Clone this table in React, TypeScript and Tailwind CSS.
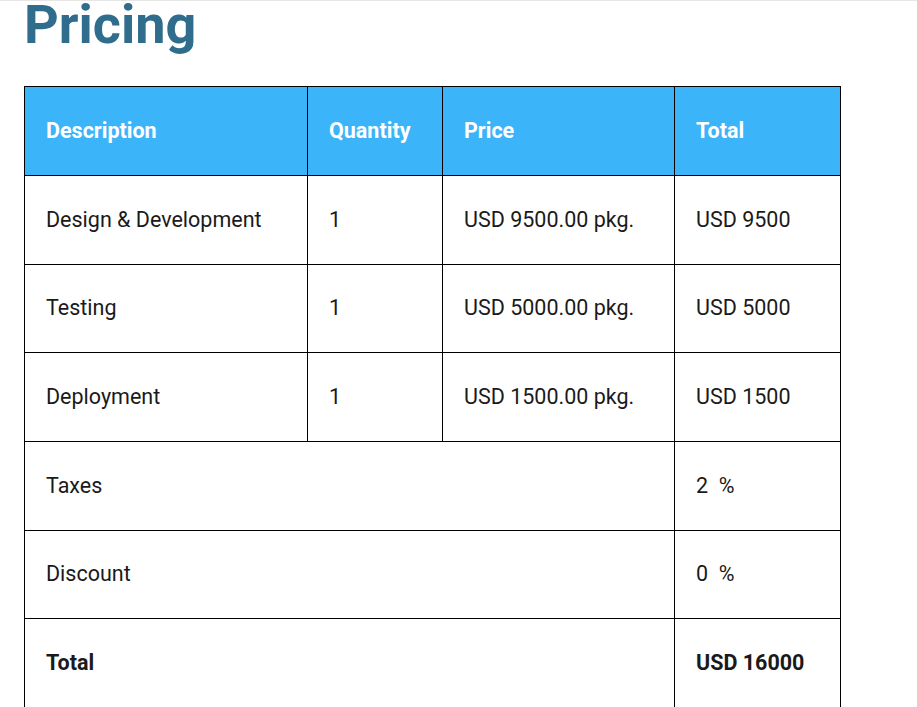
import React from "react";

const rows = [
  ["Design & Development", "1", "USD 9500.00 pkg.", "USD 9500"],
  ["Testing", "1", "USD 5000.00 pkg.", "USD 5000"],
  ["Deployment", "1", "USD 1500.00 pkg.", "USD 1500"],
];

export default function App() {
  return (
    <div className="min-h-[707px] bg-white border-t border-[#e6e6e6]" style={{ fontFamily: "Roboto, 'Liberation Sans', sans-serif" }}>
      <div className="pl-6">
        <h1 className="text-[54px] leading-[47px] font-bold text-[#306d8c]">Pricing</h1>
        <table className="mt-[38px] border-collapse table-fixed w-[816px] text-[21.5px] text-[#1a1a1a]">
          <colgroup>
            <col className="w-[283px]" />
            <col className="w-[135px]" />
            <col className="w-[232px]" />
            <col className="w-[166px]" />
          </colgroup>
          <thead>
            <tr className="h-[89px] bg-[#3bb4f9] text-white font-bold">
              <th className="border border-black text-left pl-[21px] font-bold">Description</th>
              <th className="border border-black text-left pl-[21px] font-bold">Quantity</th>
              <th className="border border-black text-left pl-[21px] font-bold">Price</th>
              <th className="border border-black text-left pl-[21px] font-bold">Total</th>
            </tr>
          </thead>
          <tbody>
            {rows.map((r) => (
              <tr key={r[0]} className="h-[88.7px]">
                {r.map((c, i) => (
                  <td key={i} className="border border-black pl-[21px]">{c}</td>
                ))}
              </tr>
            ))}
            <tr className="h-[88.7px]">
              <td colSpan={3} className="border border-black pl-[21px]">Taxes</td>
              <td className="border border-black pl-[21px]">2&nbsp; %</td>
            </tr>
            <tr className="h-[88.7px]">
              <td colSpan={3} className="border border-black pl-[21px]">Discount</td>
              <td className="border border-black pl-[21px]">0&nbsp; %</td>
            </tr>
            <tr className="h-[88.7px] font-bold">
              <td colSpan={3} className="border border-black pl-[21px]">Total</td>
              <td className="border border-black pl-[21px]">USD 16000</td>
            </tr>
          </tbody>
        </table>
      </div>
    </div>
  );
}
